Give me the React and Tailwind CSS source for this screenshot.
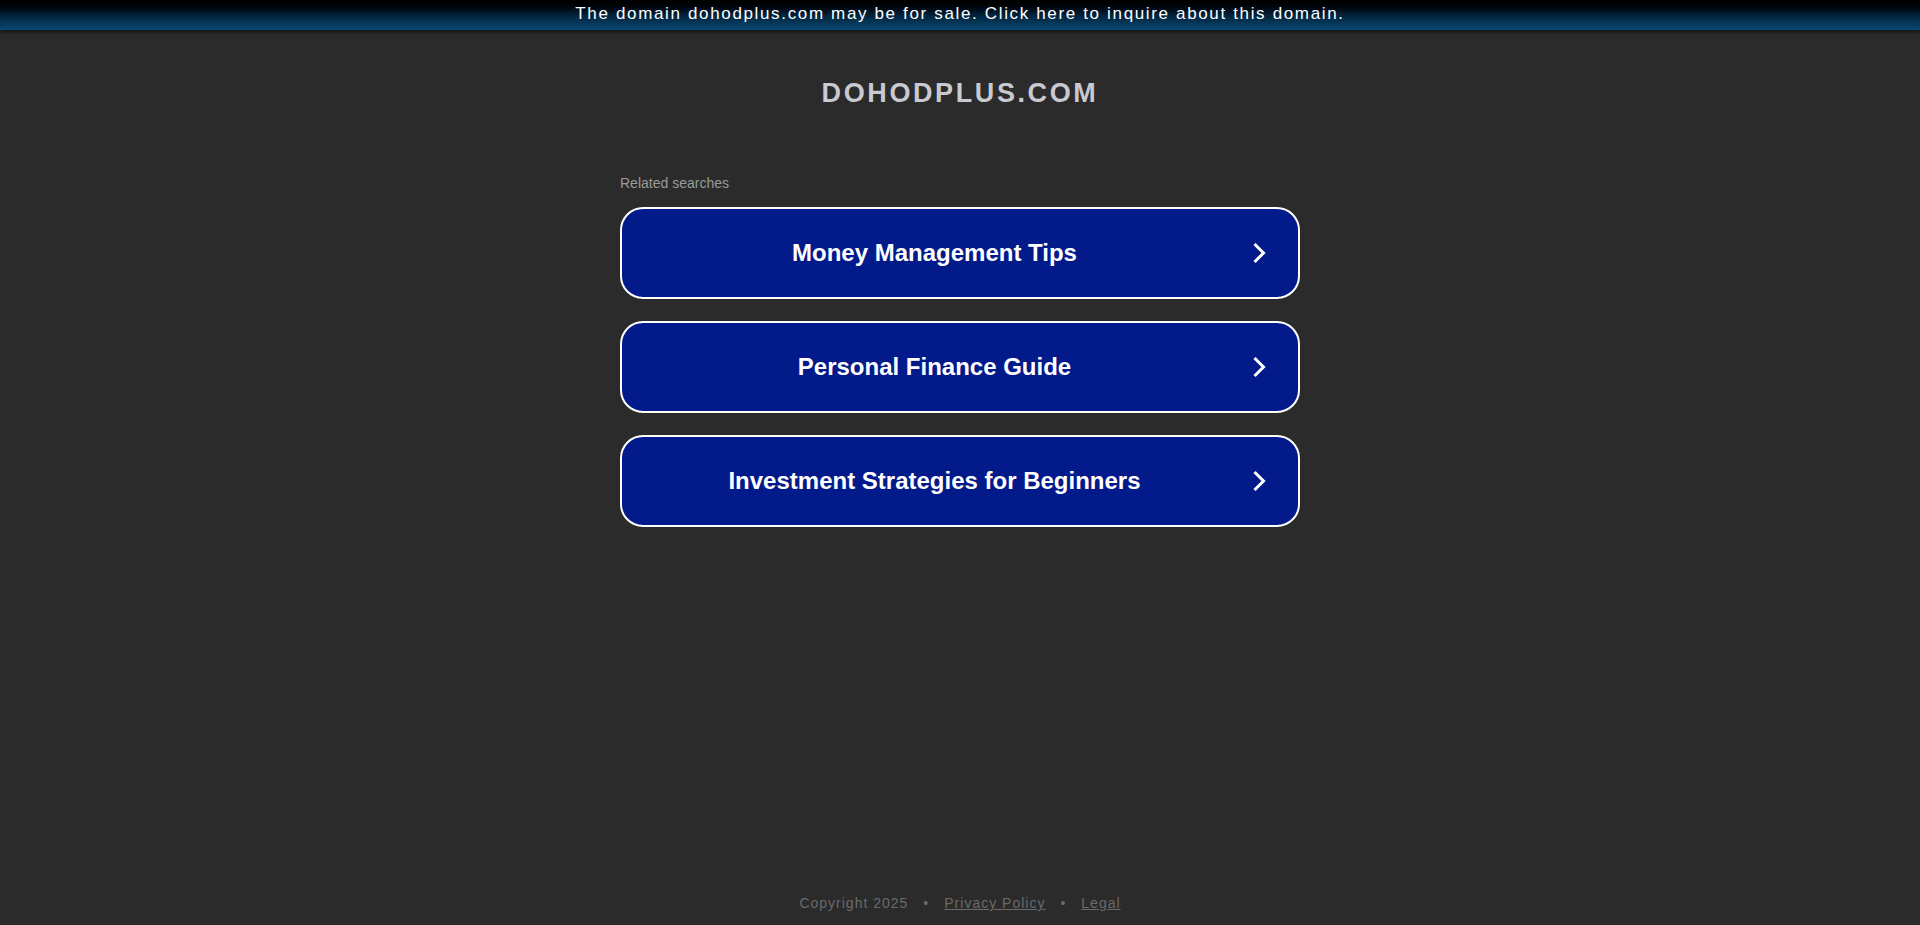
import React from "react";

const searches = [
  "Money Management Tips",
  "Personal Finance Guide",
  "Investment Strategies for Beginners",
];

function Chevron() {
  return (
    <svg width="13" height="22" viewBox="0 0 13 22" fill="none" className="shrink-0">
      <path d="M1.5 2 L10.5 11 L1.5 20" stroke="#ffffff" strokeWidth="3" strokeLinecap="butt" strokeLinejoin="miter" />
    </svg>
  );
}

export default function App() {
  return (
    <div
      className="min-h-[925px] h-[925px] bg-[#2b2b2b] flex flex-col"
      style={{ fontFamily: '"Liberation Sans", Arial, sans-serif' }}
    >
      {/* sale banner */}
      <a
        href="#"
        className="block h-[30px] leading-[28px] text-center text-white text-[17px] tracking-[1.65px] bg-gradient-to-b from-[#000000] via-[#02223a] to-[#0b4a74] shadow-[0_2px_4px_rgba(0,0,0,0.6)]"
      >
        The domain dohodplus.com may be for sale. Click here to inquire about this domain.
      </a>

      <div className="flex flex-col items-center">
        <h1 className="mt-[47px] text-[27px] leading-[32px] font-bold tracking-[2.6px] text-[#c9c9d1]">
          DOHODPLUS.COM
        </h1>

        <div className="w-[680px] mt-[66px]">
          <div className="text-[14px] leading-[17px] text-[#9a9a9a]">Related searches</div>
          <div className="mt-[15px] flex flex-col gap-[22px]">
            {searches.map((s) => (
              <a
                key={s}
                href="#"
                className="h-[92px] rounded-[23px] border-2 border-white bg-[#021a8a] flex items-center pl-[24px] pr-[32px]"
              >
                <span className="flex-1 text-center text-white font-bold text-[24px] leading-[28px]">{s}</span>
                <span className="ml-[30px] flex">
                  <Chevron />
                </span>
              </a>
            ))}
          </div>
        </div>
      </div>

      <div className="mt-auto mb-[11px] text-center text-[14px] tracking-[1px] text-[#6a6a6a]">
        <span>Copyright 2025</span>
        <span className="mx-[15px]">•</span>
        <a href="#" className="underline">Privacy Policy</a>
        <span className="mx-[15px]">•</span>
        <a href="#" className="underline">Legal</a>
      </div>
    </div>
  );
}
